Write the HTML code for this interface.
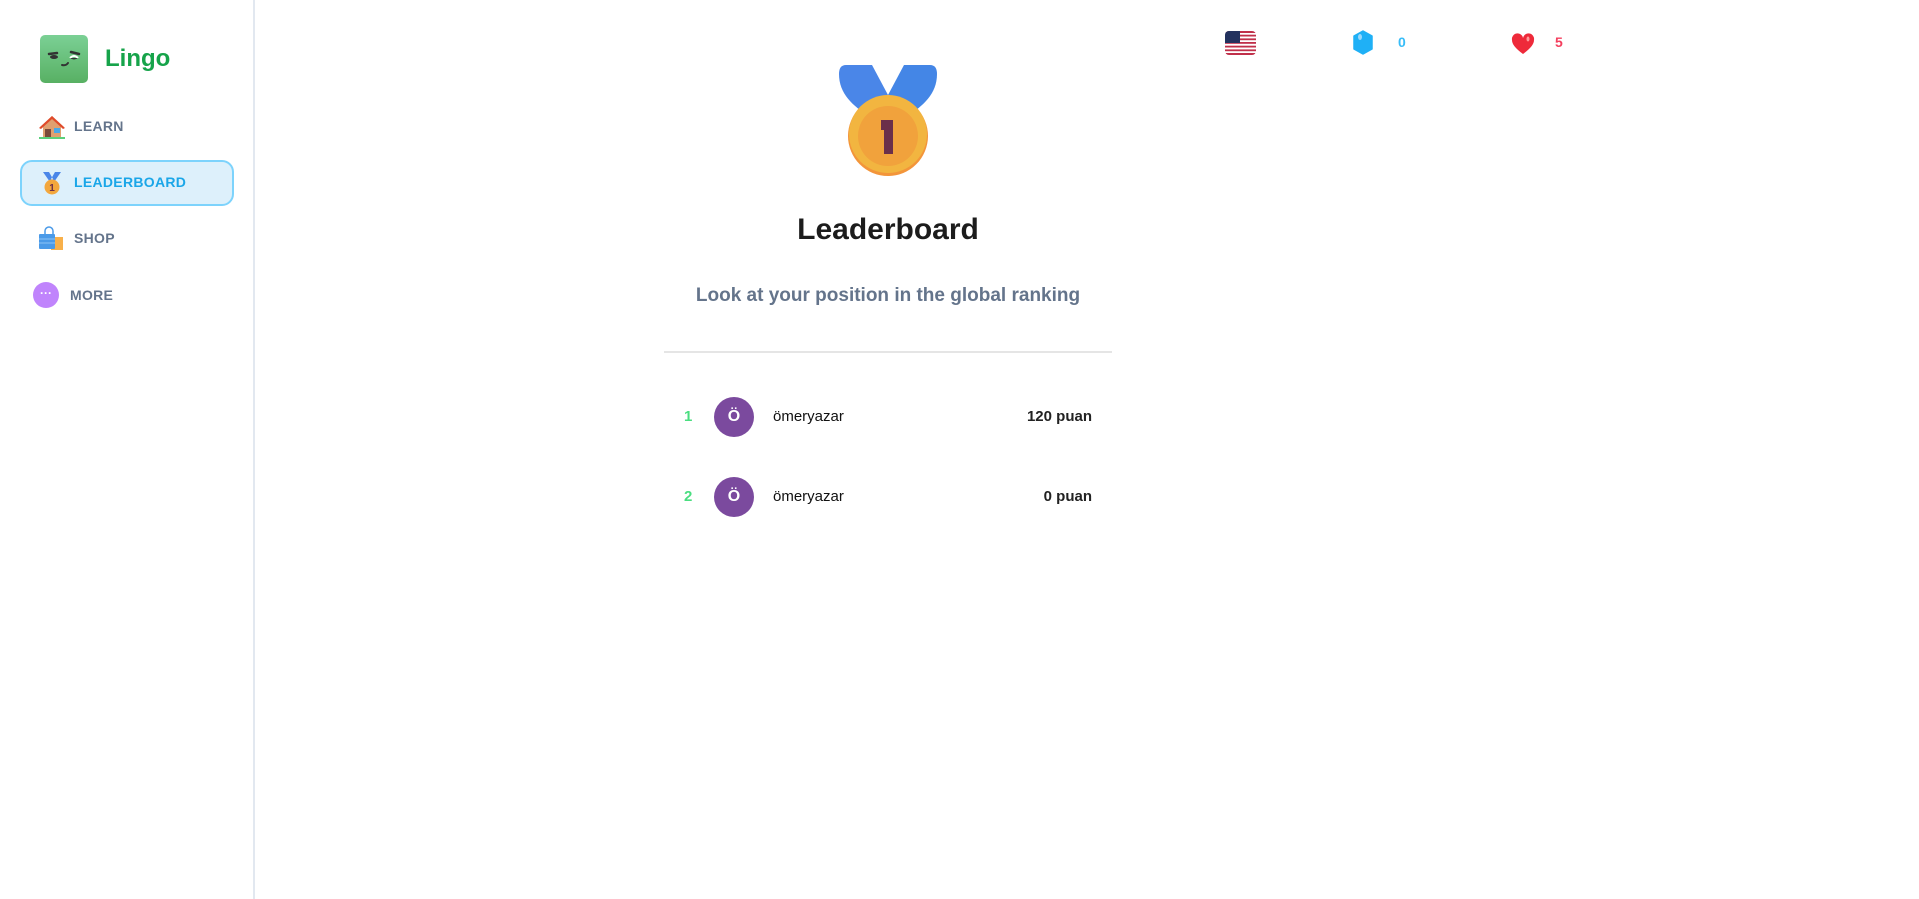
<!DOCTYPE html>
<html><head><meta charset="utf-8"><style>
*{margin:0;padding:0;box-sizing:border-box}
body{width:1919px;height:899px;background:#fff;font-family:"Liberation Sans",sans-serif;position:relative;overflow:hidden}
.side{position:absolute;left:0;top:0;width:255px;height:899px;border-right:2px solid #e2e8f0}
.abs{position:absolute}
.nav{position:absolute;font-size:14px;font-weight:bold;color:#64748b;letter-spacing:.3px}
.row{position:absolute;left:664px;width:448px;height:40px;font-size:15px}
.row .rk{position:absolute;left:20px;top:11px;color:#4ade80;font-weight:bold}
.row .av{position:absolute;left:50px;top:0;width:40px;height:40px;border-radius:50%;background:#7b4a9e;color:#fff;font-weight:bold;text-align:center;line-height:40px;font-size:16px}
.row .nm{position:absolute;left:109px;top:11px;color:#111}
.row .sc{position:absolute;right:20px;top:11px;color:#222;font-weight:bold}
</style></head><body>
<div class="side">
  <div class="abs" style="left:40px;top:35px;width:48px;height:48px;border-radius:5px;background:linear-gradient(#7bd095,#58b063)">
    <svg width="48" height="48" viewBox="0 0 48 48"><path d="M9 19l8-1M31 17l8 2" stroke="#333" stroke-width="2.5" stroke-linecap="round"/><ellipse cx="14" cy="22" rx="4" ry="2" fill="#333"/><path d="M30 23q4-4 8 0" stroke="#fff" stroke-width="2" fill="none"/><path d="M30 23q4 3 8 0" fill="#333"/><path d="M22 30q4 1 6-2" stroke="#333" stroke-width="2" fill="none" stroke-linecap="round"/></svg>
  </div>
  <div class="abs" style="left:105px;top:45px;font-size:24px;font-weight:bold;color:#16a34a">Lingo</div>
  <svg class="abs" style="left:39px;top:114px" width="26" height="26" viewBox="0 0 26 26"><path d="M13 2L1 13h3v11h18V13h3z" fill="#e0a070"/><path d="M13 2L0 14l2 1L13 5l11 10 2-1z" fill="#e04a2a"/><rect x="6" y="15" width="6" height="9" fill="#7a4a3a"/><rect x="15" y="14" width="6" height="5" fill="#4aa8e8"/><rect x="0" y="23" width="26" height="2" fill="#5ad07a"/></svg>
  <div class="nav" style="left:74px;top:118px">LEARN</div>
  <div class="abs" style="left:20px;top:160px;width:214px;height:46px;border-radius:12px;background:#ddf0fb;border:2px solid #7dd3fc"></div>
  <svg class="abs" style="left:39px;top:170px" width="26" height="26" viewBox="0 0 26 26"><path d="M4 2h6l4 7-3 3zM22 2h-6l-4 7 3 3z" fill="#4a86e8"/><circle cx="13" cy="17" r="7.5" fill="#f3a73d"/><text x="13" y="21" font-size="10" font-weight="bold" fill="#6b2f4a" text-anchor="middle" font-family="Liberation Sans">1</text></svg>
  <div class="nav" style="left:74px;top:174px;color:#1aa6e8">LEADERBOARD</div>
  <svg class="abs" style="left:38px;top:226px" width="26" height="26" viewBox="0 0 26 26"><rect x="13" y="11" width="12" height="13" fill="#f8b04a"/><path d="M7 8V5a4 4 0 0 1 8 0v3" stroke="#4a9ae8" stroke-width="1.5" fill="none"/><rect x="1" y="8" width="16" height="15" rx="1" fill="#4a9ae8"/><path d="M1 13h16M1 17h16" stroke="#8cc4f6"/></svg>
  <div class="nav" style="left:74px;top:230px">SHOP</div>
  <div class="abs" style="left:33px;top:282px;width:26px;height:26px;border-radius:50%;background:#c084fc;color:#fff;font-size:12px;text-align:center;line-height:22px;font-weight:bold">···</div>
  <div class="nav" style="left:70px;top:287px">MORE</div>
</div>

<svg class="abs" style="left:1225px;top:31px" width="31" height="24" viewBox="0 0 31 24"><defs><clipPath id="c"><rect width="31" height="24" rx="4"/></clipPath></defs><g clip-path="url(#c)"><rect width="31" height="24" fill="#fff"/><g fill="#c0304a"><rect y="0" width="31" height="2"/><rect y="3.7" width="31" height="1.8"/><rect y="7.4" width="31" height="1.8"/><rect y="11" width="31" height="1.8"/><rect y="14.7" width="31" height="1.8"/><rect y="18.4" width="31" height="1.8"/><rect y="22" width="31" height="2"/></g><rect width="15" height="12" fill="#23325e"/></g></svg>
<svg class="abs" style="left:1352px;top:30px" width="22" height="25" viewBox="0 0 22 25"><path d="M11 1l9 5v13l-9 5-9-5V6z" fill="#1fb0f6" stroke="#1fb0f6" stroke-width="1.5" stroke-linejoin="round"/><ellipse cx="8" cy="7" rx="2" ry="3" fill="#9ad8fb"/></svg>
<div class="abs" style="left:1398px;top:34px;font-size:14px;font-weight:bold;color:#38bdf8">0</div>
<svg class="abs" style="left:1511px;top:33px" width="24" height="22" viewBox="0 0 24 22"><path d="M12 21C4 15 1 11 1 7a5.5 5.5 0 0 1 11-2 5.5 5.5 0 0 1 11 2c0 4-3 8-11 14z" fill="#ee2a3a"/><ellipse cx="17" cy="6" rx="1.5" ry="2.5" fill="#f99"/></svg>
<div class="abs" style="left:1555px;top:34px;font-size:14px;font-weight:bold;color:#f43f5e">5</div>

<svg class="abs" style="left:838px;top:64px" width="100" height="112" viewBox="0 0 100 112"><path d="M8 1h26l16 30-18 22C15 42 1 30 1 10q0-9 7-9z" fill="#4a86e8"/><path d="M92 1H66L50 31l18 22C85 42 99 30 99 10q0-9-7-9z" fill="#4486e6"/><circle cx="50" cy="72" r="40" fill="#f3953a"/><circle cx="50" cy="70" r="39" fill="#f2b540"/><circle cx="50" cy="72" r="30" fill="#f1a23c"/><path d="M43 56h12v34h-9V66h-3z" fill="#6b2f4a"/></svg>
<div class="abs" style="left:0;width:1776px;text-align:center;top:213px;font-size:30px;font-weight:bold;color:#1c1c1c">Leaderboard</div>
<div class="abs" style="left:0;width:1776px;text-align:center;top:285px;font-size:19px;font-weight:bold;color:#64748b">Look at your position in the global ranking</div>
<div class="abs" style="left:664px;top:351px;width:448px;height:2px;background:#e5e5e5"></div>
<div class="row" style="top:397px"><span class="rk">1</span><div class="av">Ö</div><span class="nm">ömeryazar</span><span class="sc">120 puan</span></div>
<div class="row" style="top:477px"><span class="rk">2</span><div class="av">Ö</div><span class="nm">ömeryazar</span><span class="sc">0 puan</span></div>
</body></html>
